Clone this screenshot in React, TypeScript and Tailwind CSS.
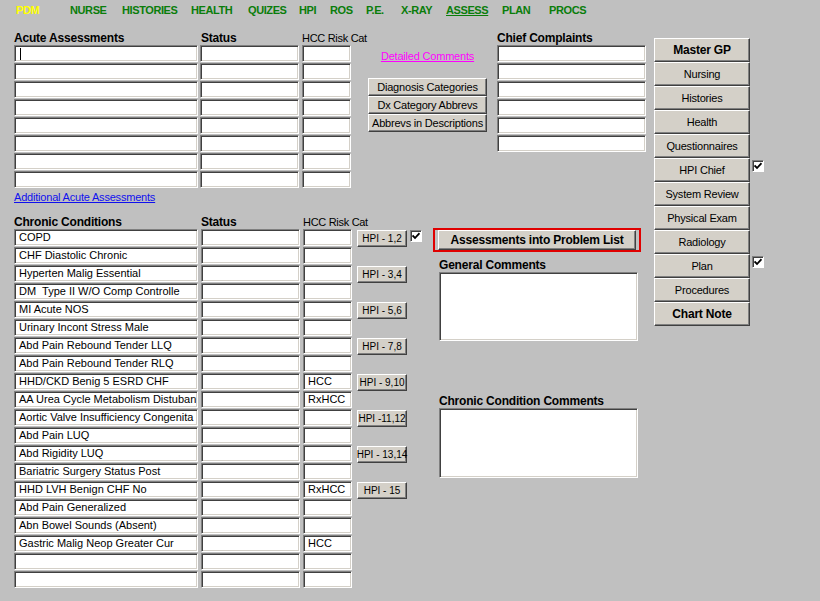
import React from "react";

const FIELD =
  "h-[17px] bg-white border border-t-[#808080] border-l-[#808080] border-r-white border-b-white shadow-[inset_1px_1px_0_#404040,inset_-1px_-1px_0_#d4d0c8] pl-[4px] flex items-center overflow-hidden whitespace-pre text-[11px] leading-none text-black shrink-0";
const BTN =
  "bg-[#d4d0c8] border border-t-white border-l-white border-r-[#404040] border-b-[#404040] shadow-[inset_-1px_-1px_0_#808080] flex items-center justify-center whitespace-nowrap text-black leading-none shrink-0";

function Field({ w, text, cursor }: { w: string; text?: string; cursor?: boolean }) {
  return (
    <div className={FIELD + " " + w}>
      {cursor ? <span className="w-[1px] h-[12px] bg-black ml-[1px]" /> : null}
      {text}
    </div>
  );
}

function Check() {
  return (
    <div className="w-[12px] h-[12px] bg-white border border-t-[#808080] border-l-[#808080] border-r-white border-b-white shadow-[inset_1px_1px_0_#404040] flex items-center justify-center">
      <svg width="8" height="8" viewBox="0 0 8 8">
        <path d="M0.5 3.5 L3 6 L7.5 1.2" stroke="#000" strokeWidth="1.8" fill="none" />
      </svg>
    </div>
  );
}

const nav: [string, string][] = [
  ["PDM", "w-[54px]"],
  ["NURSE", "w-[52px]"],
  ["HISTORIES", "w-[69px]"],
  ["HEALTH", "w-[57px]"],
  ["QUIZES", "w-[51px]"],
  ["HPI", "w-[31px]"],
  ["ROS", "w-[36px]"],
  ["P.E.", "w-[35px]"],
  ["X-RAY", "w-[45px]"],
  ["ASSESS", "w-[56px]"],
  ["PLAN", "w-[47px]"],
  ["PROCS", "w-[60px]"],
];

const chronic: [string, string][] = [
  ["COPD", ""],
  ["CHF Diastolic Chronic", ""],
  ["Hyperten Malig Essential", ""],
  ["DM  Type II W/O Comp Controlle", ""],
  ["MI Acute NOS", ""],
  ["Urinary Incont Stress Male", ""],
  ["Abd Pain Rebound Tender LLQ", ""],
  ["Abd Pain Rebound Tender RLQ", ""],
  ["HHD/CKD Benig 5 ESRD CHF", "HCC"],
  ["AA Urea Cycle Metabolism Distuban", "RxHCC"],
  ["Aortic Valve Insufficiency Congenita", ""],
  ["Abd Pain LUQ", ""],
  ["Abd Rigidity LUQ", ""],
  ["Bariatric Surgery Status Post", ""],
  ["HHD LVH Benign CHF No", "RxHCC"],
  ["Abd Pain Generalized", ""],
  ["Abn Bowel Sounds (Absent)", ""],
  ["Gastric Malig Neop Greater Cur", "HCC"],
  ["", ""],
  ["", ""],
];

const hpi = ["HPI - 1,2", "HPI - 3,4", "HPI - 5,6", "HPI - 7,8", "HPI - 9,10", "HPI -11,12", "HPI - 13,14", "HPI - 15"];

const rightBtns: [string, boolean, boolean][] = [
  ["Master GP", true, false],
  ["Nursing", false, false],
  ["Histories", false, false],
  ["Health", false, false],
  ["Questionnaires", false, false],
  ["HPI Chief", false, true],
  ["System Review", false, false],
  ["Physical Exam", false, false],
  ["Radiology", false, false],
  ["Plan", false, true],
  ["Procedures", false, false],
  ["Chart Note", true, false],
];

function Headers({ first, hccLeft }: { first: string; hccLeft: string }) {
  return (
    <div className="flex h-[14px] items-center text-[12px] leading-[14px] whitespace-nowrap">
      <div className="w-[187px] shrink-0 font-bold tracking-[-0.2px]">{first}</div>
      <div className={"shrink-0 font-bold tracking-[-0.2px] " + hccLeft}>Status</div>
      <div className="shrink-0 text-[11px] tracking-[-0.3px]">HCC Risk Cat</div>
    </div>
  );
}

export default function App() {
  return (
    <div className="w-[820px] h-[601px] bg-[#c0c0c0] overflow-hidden font-['Liberation_Sans',Arial,sans-serif] text-black">
      {/* nav */}
      <div className="flex pl-[16px] pt-[4px] h-[17px] text-[11px] leading-[13px] font-bold tracking-[-0.4px]">
        {nav.map(([t, w]) => (
          <div
            key={t}
            className={
              w +
              " shrink-0 " +
              (t === "PDM" ? "text-[#ffff00]" : "text-[#0a7d0a]") +
              (t === "ASSESS" ? " underline" : "")
            }
          >
            {t}
          </div>
        ))}
      </div>

      <div className="flex pl-[14px] mt-[14px]">
        {/* left area */}
        <div className="flex flex-col w-[632px] shrink-0">
          {/* top row */}
          <div className="flex">
            <div className="w-[338px] shrink-0 flex flex-col">
              <Headers first="Acute Assessments" hccLeft="w-[101px]" />
              {Array.from({ length: 8 }).map((_, i) => (
                <div key={i} className="flex mb-[1px]">
                  <Field w="w-[184px]" cursor={i === 0} />
                  <Field w="w-[99px] ml-[2px]" />
                  <Field w="w-[49px] ml-[3px]" />
                </div>
              ))}
              <div className="mt-[2px] h-[13px] text-[11px] leading-[13px] text-[#1010ee] underline tracking-[-0.2px]">
                Additional Acute Assessments
              </div>
            </div>
            <div className="w-[119px] shrink-0 ml-[16px] flex flex-col">
              <div className="mt-[19px] h-[13px] text-[11px] leading-[13px] text-[#ff00ff] underline text-center tracking-[-0.2px]">
                Detailed Comments
              </div>
              <div className="mt-[15px] flex flex-col">
                {["Diagnosis Categories", "Dx Category Abbrevs", "Abbrevs in Descriptions"].map((t) => (
                  <div key={t} className={BTN + " h-[18px] text-[11px] tracking-[-0.2px]"}>
                    {t}
                  </div>
                ))}
              </div>
            </div>
            <div className="w-[149px] shrink-0 ml-[10px] flex flex-col">
              <div className="h-[14px] text-[12px] leading-[14px] font-bold tracking-[-0.2px] whitespace-nowrap">
                Chief Complaints
              </div>
              {Array.from({ length: 6 }).map((_, i) => (
                <Field key={i} w="w-[149px] mb-[1px]" />
              ))}
            </div>
          </div>

          {/* bottom row */}
          <div className="flex mt-[11px]">
            <div className="w-[338px] shrink-0 flex flex-col">
              <Headers first="Chronic Conditions" hccLeft="w-[102px]" />
              {chronic.map(([t, h], i) => (
                <div key={i} className="flex mb-[1px]">
                  <Field w="w-[184px]" text={t} />
                  <Field w="w-[99px] ml-[3px]" />
                  <Field w="w-[49px] ml-[3px]" text={h} />
                </div>
              ))}
            </div>
            <div className="ml-[5px] mt-[15px] flex flex-col shrink-0">
              {hpi.map((t, i) => (
                <div key={t} className="flex items-start h-[17px] mb-[19px]">
                  <div className={BTN + " w-[50px] h-[17px] text-[10px]"}>{t}</div>
                  {i === 0 ? (
                    <div className="ml-[3px]">
                      <Check />
                    </div>
                  ) : null}
                </div>
              ))}
            </div>
            <div className="ml-[11px] mt-[13px] flex flex-col w-[208px] shrink-0">
              <div className="border-2 border-[#e00000] px-[3px] h-[24px]">
                <div className={BTN + " h-[20px] text-[12px] font-bold tracking-[-0.2px]"}>
                  Assessments into Problem List
                </div>
              </div>
              <div className="ml-[6px] mt-[7px] h-[13px] text-[12px] leading-[13px] font-bold tracking-[-0.2px] whitespace-nowrap">
                General Comments
              </div>
              <div className="ml-[6px] w-[199px] h-[69px] bg-white border border-t-[#808080] border-l-[#808080] border-r-white border-b-white shadow-[inset_1px_1px_0_#404040,inset_-1px_-1px_0_#d4d0c8]" />
              <div className="ml-[6px] mt-[54px] h-[13px] text-[12px] leading-[13px] font-bold tracking-[-0.2px] whitespace-nowrap">
                Chronic Condition Comments
              </div>
              <div className="ml-[6px] w-[199px] h-[70px] bg-white border border-t-[#808080] border-l-[#808080] border-r-white border-b-white shadow-[inset_1px_1px_0_#404040,inset_-1px_-1px_0_#d4d0c8]" />
            </div>
          </div>
        </div>

        {/* right column */}
        <div className="ml-[8px] mt-[7px] flex flex-col shrink-0">
          {rightBtns.map(([t, bold, chk]) => (
            <div key={t} className="flex items-start">
              <div
                className={
                  BTN +
                  " w-[96px] h-[24px] text-[11px] tracking-[-0.2px]" +
                  (bold ? " font-bold text-[12px]" : "")
                }
              >
                {t}
              </div>
              {chk ? (
                <div className="ml-[2px] mt-[2px]">
                  <Check />
                </div>
              ) : null}
            </div>
          ))}
        </div>
      </div>
    </div>
  );
}
